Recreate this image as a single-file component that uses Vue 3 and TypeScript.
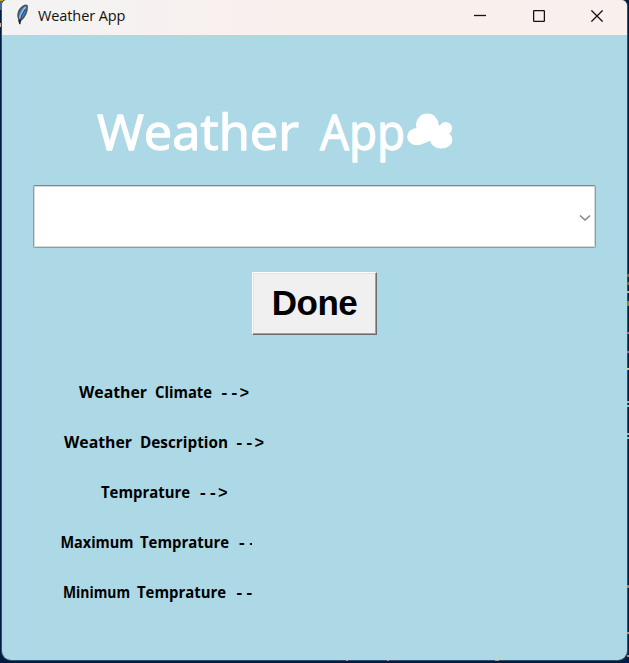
<script setup lang="ts">
interface Word {
  text: string
  x: number
  width: number
}
interface Row {
  words: Word[]
  arrow: string
  arrowX: string
}

const rows: Row[] = [
  { words: [{ text: 'Weather', x: 79, width: 68 }, { text: 'Climate', x: 155, width: 57 }], arrow: '-->', arrowX: '219.5 229.5 239.5' },
  { words: [{ text: 'Weather', x: 64, width: 68 }, { text: 'Description', x: 140, width: 88 }], arrow: '-->', arrowX: '234.5 244.5 254.5' },
  { words: [{ text: 'Temprature', x: 101, width: 89 }], arrow: '-->', arrowX: '198 208 218' },
  { words: [{ text: 'Maximum', x: 60.5, width: 73 }, { text: 'Temprature', x: 140, width: 89 }], arrow: '--', arrowX: '237 247.5' },
  { words: [{ text: 'Minimum', x: 63, width: 67 }, { text: 'Temprature', x: 137, width: 89 }], arrow: '--', arrowX: '234.5 244.5' },
]

const specks = [
  { y: 274, h: 3, c: '#806f3c' },
  { y: 282, h: 3, c: '#7b6b38' },
  { y: 291, h: 2, c: '#a9c98d' },
  { y: 301, h: 5, c: '#947c35' },
  { y: 332, h: 2, c: '#b95eb0' },
  { y: 351, h: 2, c: '#b95eb0' },
  { y: 368, h: 2, c: '#e4c293' },
  { y: 401, h: 2, c: '#79c6c9' },
  { y: 405, h: 2, c: '#79c6c9' },
  { y: 433, h: 2, c: '#79c6c9' },
  { y: 437, h: 2, c: '#79c6c9' },
  { y: 585, h: 3, c: '#a98367' },
  { y: 632, h: 2, c: '#bd8c78' },
  { y: 655, h: 2, c: '#bd8c78' },
]
</script>

<template>
  <div class="desktop">
    <div class="window">
      <header class="titlebar">
        <svg class="feather" width="14" height="22" viewBox="0 0 14 22">
          <path d="M3.4 16 C.8 12 2 5.8 7 2.5 Q9.5 .8 11 1.6 C12 6.5 8.8 13.5 4.2 17Z" fill="#4385c8" stroke="#4b4f53" stroke-width="1.5" />
          <path d="M9.6 3 Q5 8 3.6 14.5" fill="none" stroke="#8fc4ee" stroke-width="1.4" />
          <path d="M9.6 5 Q5.6 10 4.4 16 L3.8 20" fill="none" stroke="#25405c" stroke-width=".9" />
          <path d="M2 15.5 L5 16 L4.2 20.5 L3.2 20Z" fill="#222" />
        </svg>
        <span class="caption">Weather App</span>
        <div class="controls">
          <svg width="12" height="12" viewBox="0 0 12 12"><path d="M0 5.5H12" /></svg>
          <svg width="12" height="12" viewBox="0 0 12 12"><rect x=".6" y=".6" width="10.8" height="10.8" rx="1" /></svg>
          <svg width="12" height="12" viewBox="0 0 12 12"><path d="M.4 .4L11.6 11.6M11.6 .4L.4 11.6" /></svg>
        </div>
      </header>

      <main class="client">
        <svg class="heading" width="625" height="150" viewBox="2 35 625 150">
          <text x="97" y="149.5" textLength="202" lengthAdjust="spacingAndGlyphs">Weather</text>
          <text x="320" y="149.5" textLength="85" lengthAdjust="spacingAndGlyphs">App</text>
          <g class="cloud">
            <circle cx="427.3" cy="124.8" r="11.2" />
            <ellipse cx="417" cy="136.7" rx="9.8" ry="8.6" />
            <circle cx="445.7" cy="128.3" r="6.4" />
            <ellipse cx="441.3" cy="139.8" rx="11" ry="8.8" />
            <path d="M416 128L438 124L449 135L430 141L422 144Z" />
          </g>
        </svg>

        <div class="combo">
          <svg width="12" height="8" viewBox="0 0 12 8"><path d="M1 1.5L6 6L11 1.5" /></svg>
        </div>

        <button class="done" type="button">Done</button>

        <div class="rows">
          <svg v-for="(row, i) in rows" :key="i" class="row" :width="row.arrow === '--' ? 250 : 290" height="50" :viewBox="row.arrow === '--' ? '2 0 250 50' : '2 0 290 50'">
            <text v-for="word in row.words" :key="word.text" :x="word.x" y="30.5" :textLength="word.width" lengthAdjust="spacingAndGlyphs">{{ word.text }}</text>
            <text class="arrow" :x="row.arrowX" y="30.5">{{ row.arrow }}</text>
          </svg>
        </div>
      </main>
    </div>
    <svg class="backdrop" width="629" height="663" viewBox="0 0 629 663">
      <rect x="0" y="0" width="3" height="1" fill="#c9a415" />
      <rect x="0" y="1" width="2" height="9" fill="#49698f" />
      <rect x="0" y="23" width="1" height="4" fill="#c9ab91" />
      <rect v-for="s in specks" :key="s.y" x="627" :y="s.y" width="2" :height="s.h" :fill="s.c" />
      <path d="M346 660.5h2M387 660.5h2M495 660.5h4" stroke="#a99a8c" />
    </svg>
  </div>
</template>

<style>
body {
  background: #001c43;
  overflow: hidden;
}
</style>

<style scoped>
.desktop {
  box-sizing: border-box;
  position: relative;
  width: 629px;
  height: 663px;
  padding: 0 2px 3px;
  background: #001c43;
}
.window {
  display: flex;
  flex-direction: column;
  height: 660px;
  overflow: hidden;
  border-radius: 5px 6px 9px 9px;
  background: #add8e6;
  box-shadow: 0 0 0 1px #344e68;
}
.titlebar {
  display: flex;
  align-items: center;
  flex: 0 0 35px;
  box-sizing: border-box;
  padding: 0 24px 3px 14px;
  background: linear-gradient(90deg, #f3f3f3, #f9f0ee 45%);
}
.feather {
  margin-top: -2px;
}
.caption {
  margin: -1px 0 0 8px;
  font: 14.5px "Open Sans", "Noto Sans", sans-serif;
  letter-spacing: -0.1px;
  color: #111;
}
.controls {
  display: flex;
  gap: 46.5px;
  margin-left: auto;
}
.controls svg {
  fill: none;
  stroke: #111;
  stroke-width: 1.3;
}
.client {
  display: flex;
  flex-direction: column;
  align-items: center;
}
.heading {
  flex: none;
  display: block;
}
.heading text {
  font: 50px "Open Sans", "Noto Sans", sans-serif;
  fill: #fff;
  stroke: #fff;
  stroke-width: 1.3;
  stroke-linejoin: round;
}
.cloud {
  fill: #fff;
}
.combo {
  display: flex;
  align-items: center;
  justify-content: flex-end;
  box-sizing: border-box;
  width: 563px;
  height: 63px;
  padding: 2px 4px 0 0;
  border: 1px solid #999;
  border-top-color: #858585;
  border-radius: 2px;
  background: #fff;
  box-shadow: inset 0 0 0 1px #d5d8d9;
}
.combo path {
  fill: none;
  stroke: #858585;
  stroke-width: 1.5;
}
.done {
  width: 125px;
  height: 63px;
  margin-top: 24px;
  padding: 0 0 1px;
  border: 1px solid;
  border-color: #fff #6c6c6c #6c6c6c #fff;
  border-radius: 0;
  background: #f0f0f0;
  box-shadow: inset -1px -1px #a0a0a0, inset 1px 1px #e3e3e3;
  font: bold 35px "Liberation Sans", Arial, sans-serif;
  letter-spacing: -0.5px;
  color: #000;
}
.rows {
  display: flex;
  flex-direction: column;
  align-self: flex-start;
  margin-top: 32px;
}
.row {
  display: block;
  overflow: hidden;
}
.row text {
  font: bold 16px "Open Sans", "Noto Sans", sans-serif;
  fill: #000;
}
.row .arrow {
  font-family: "Liberation Mono", monospace;
}
.backdrop {
  position: absolute;
  inset: 0;
  pointer-events: none;
}
</style>
